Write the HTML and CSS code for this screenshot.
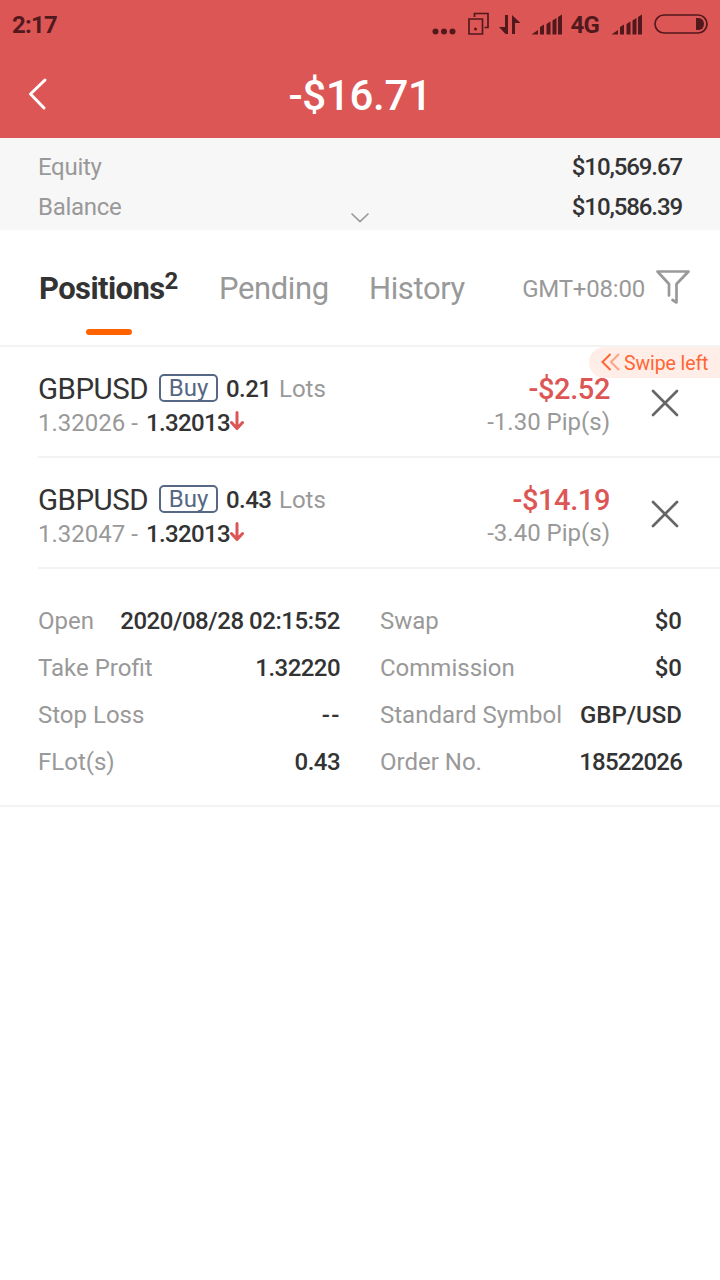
FILE: index.html
```html
<!DOCTYPE html>
<html lang="en">
<head>
    <meta charset="UTF-8">
    <meta name="viewport" content="width=device-width, initial-scale=1.0">
    <title>Positions</title>
    <link rel="stylesheet" href="styles.css">
</head>
<body>
    <header class="header">
        <div class="status-bar">
            <span class="status-text time">2:17</span>
            <svg class="status-icons" width="276" height="50" viewBox="0 0 276 50">
                <g fill="#52191d">
                    <circle cx="3.500" cy="31.500" r="3"/>
                    <circle cx="12" cy="31.500" r="3"/>
                    <circle cx="20.500" cy="31.500" r="3"/>
                    <circle cx="43.500" cy="29" r="1.500"/>
                    <path d="M76 15v19h-2.500l-6.500-7h6V15zM80 15l8.500 8H83v11h-3z"/>
                    <path d="M99.500 34.500l6.500-4.500v4.500zM108 27l4-2.500v10h-4zM114.500 24l4-2.500v13h-4zM120.500 20.500l4-2.500v16.500h-4zM126 17l4-2.500v20h-4z"/>
                    <path d="M179.500 34.500l6.500-4.500v4.500zM188 27l4-2.500v10h-4zM194.500 24l4-2.500v13h-4zM200.500 20.500l4-2.500v16.500h-4zM206 17l4-2.500v20h-4z"/>
                    <path d="M264 18h3a5 6 0 0 1 0 12h-3z"/>
                </g>
                <g fill="none" stroke="#52191d" stroke-width="1.700">
                    <path d="M37 19h13.500v15H37zM42.500 17v-3.500h13.500v14h-3.500"/>
                    <rect x="223" y="15" width="52" height="18" rx="9"/>
                </g>
                <text class="status-text" x="138.500" y="33" fill="#52191d">4G</text>
            </svg>
        </div>
        <div class="nav">
            <svg class="back" width="20" height="34" viewBox="0 0 20 34">
                <path d="M17 3L2.500 17 16 31" fill="none" stroke="#fff" stroke-width="3" stroke-linecap="round" stroke-linejoin="round"/>
            </svg>
            <h1 class="total">-$16.71</h1>
        </div>
    </header>

    <section class="summary">
        <div class="summary-row"><span>Equity</span><span class="num">$10,569.67</span></div>
        <div class="summary-row"><span>Balance</span><span class="num">$10,586.39</span></div>
        <svg class="expand" width="20" height="12" viewBox="0 0 20 12">
            <path d="M1.500 1.500L10 9.500l8.500-8" fill="none" stroke="#999" stroke-width="1.700"/>
        </svg>
    </section>

    <nav class="tabs">
        <div class="tab active">Positions<span class="count">2</span></div>
        <div class="tab pending">Pending</div>
        <div class="tab history">History</div>
        <div class="timezone">GMT+08:00</div>
        <svg class="filter" width="36" height="36" viewBox="0 0 36 36">
            <path d="M14 26.500V15L2.500 2.500h31L21.500 15v18.500L17.500 31" fill="none" stroke="#999" stroke-width="2.700" stroke-linejoin="round" stroke-linecap="round"/>
        </svg>
    </nav>

    <main class="positions">
        <div class="swipe-hint">
            <svg width="19" height="18" viewBox="0 0 19 18" fill="none" stroke="#ff6633" stroke-width="2">
                <path d="M9.500 1L1.500 9l8 8"/>
                <path d="M18 1l-8 8 8 8" opacity=".55"/>
            </svg>
            <span class="swipe-text">Swipe left</span>
        </div>

        <article class="position">
            <div class="info">
                <div class="line top">
                    <span class="symbol">GBPUSD</span>
                    <span class="side">Buy</span>
                    <span class="num lots">0.21</span>
                    <span class="unit">Lots</span>
                </div>
                <div class="line bottom">
                    <span class="prices">1.32026 - </span><span class="num price">1.32013</span>
                    <svg class="down" width="14" height="20" viewBox="0 0 14 20">
                        <path d="M7 1.500v16M1.500 11.500L7 17.500l5.500-6" fill="none" stroke="#dd5656" stroke-width="3" stroke-linecap="round" stroke-linejoin="round"/>
                    </svg>
                </div>
            </div>
            <div class="result">
                <div class="profit">-$2.52</div>
                <div class="pips">-1.30 Pip(s)</div>
            </div>
            <svg class="close" width="28" height="28" viewBox="0 0 28 28">
                <path d="M2 2l24 24M26 2L2 26" stroke="#666" stroke-width="2.700" stroke-linecap="round"/>
            </svg>
        </article>

        <article class="position">
            <div class="info">
                <div class="line top">
                    <span class="symbol">GBPUSD</span>
                    <span class="side">Buy</span>
                    <span class="num lots">0.43</span>
                    <span class="unit">Lots</span>
                </div>
                <div class="line bottom">
                    <span class="prices">1.32047 - </span><span class="num price">1.32013</span>
                    <svg class="down" width="14" height="20" viewBox="0 0 14 20">
                        <path d="M7 1.500v16M1.500 11.500L7 17.500l5.500-6" fill="none" stroke="#dd5656" stroke-width="3" stroke-linecap="round" stroke-linejoin="round"/>
                    </svg>
                </div>
            </div>
            <div class="result">
                <div class="profit">-$14.19</div>
                <div class="pips">-3.40 Pip(s)</div>
            </div>
            <svg class="close" width="28" height="28" viewBox="0 0 28 28">
                <path d="M2 2l24 24M26 2L2 26" stroke="#666" stroke-width="2.700" stroke-linecap="round"/>
            </svg>
        </article>
    </main>

    <section class="details">
        <div class="detail"><span>Open</span><span class="num date">2020/08/28 02:15:52</span></div>
        <div class="detail"><span>Swap</span><span class="num wide">$0</span></div>
        <div class="detail"><span>Take Profit</span><span class="num">1.32220</span></div>
        <div class="detail"><span>Commission</span><span class="num wide">$0</span></div>
        <div class="detail"><span>Stop Loss</span><span class="num empty">--</span></div>
        <div class="detail"><span>Standard Symbol</span><span class="num wide">GBP/USD</span></div>
        <div class="detail"><span>FLot(s)</span><span class="num">0.43</span></div>
        <div class="detail"><span>Order No.</span><span class="num order">18522026</span></div>
    </section>
</body>
</html>
```
FILE: styles.css
```css
* {
    box-sizing: border-box;
}
body {
    margin: 0;
    min-height: 1280px;
    font-family: Roboto, "Liberation Sans", sans-serif;
    font-size: 24px;
    background-color: #fff;
    color: #333;
    white-space: nowrap;
}
svg {
    display: block;
    flex-shrink: 0;
}
.header {
    height: 138px;
    background-color: #dd5656;
}
.status-bar {
    display: flex;
    justify-content: space-between;
    height: 50px;
    padding: 0 12px;
    line-height: 50px;
}
.status-text {
    font-size: 24px;
    font-weight: 700;
    letter-spacing: -0.8px;
    color: #52191d;
}
.nav {
    display: grid;
    grid-template-columns: 20px 1fr 20px;
    align-items: center;
    height: 88px;
    padding: 0 28px;
}
.back {
    margin-bottom: 2px;
}
.total {
    margin: 0;
    text-align: center;
    color: #fff;
    font-size: 42px;
    font-weight: 500;
    line-height: 88px;
    letter-spacing: -0.3px;
    padding-top: 2px;
}
.num {
    color: #333;
    font-weight: 500;
    letter-spacing: -0.55px;
}
.summary {
    position: relative;
    height: 92px;
    padding: 9px 38px 0;
    background-color: #f7f7f7;
    color: #999;
    letter-spacing: -0.3px;
}
.summary .num {
    letter-spacing: -1.1px;
}
.summary-row {
    display: flex;
    justify-content: space-between;
    line-height: 40px;
}
.expand {
    position: absolute;
    left: 350px;
    bottom: 6px;
}
.tabs {
    display: flex;
    align-items: center;
    height: 117px;
    padding: 0 30px 0 39px;
    border-bottom: 2px solid #f3f3f3;
    color: #999;
    font-size: 31px;
    letter-spacing: -0.4px;
}
.tab {
    height: 115px;
    line-height: 117px;
}
.tab.active {
    position: relative;
    width: 180px;
    color: #333;
    font-weight: 700;
    letter-spacing: -0.6px;
}
.tab.active::after {
    content: "";
    position: absolute;
    left: 47px;
    bottom: 10px;
    width: 46px;
    height: 6px;
    border-radius: 3px;
    background-color: #ff6200;
}
.count {
    font-size: 24px;
    line-height: 1;
    vertical-align: 10px;
}
.pending {
    width: 150px;
}
.timezone {
    margin-left: auto;
    padding-top: 2px;
    font-size: 24px;
    letter-spacing: -0.2px;
}
.filter {
    margin: 0 -1px 2px 10px;
}
.positions {
    position: relative;
}
.swipe-hint {
    position: absolute;
    top: 0;
    right: 0;
    display: flex;
    align-items: center;
    gap: 4px;
    width: 131px;
    height: 31px;
    padding-left: 12px;
    border-radius: 16px 0 0 16px;
    background-color: #ffede8;
    color: #ff6633;
    font-size: 19.5px;
    letter-spacing: -0.1px;
}
.swipe-hint svg {
    margin-bottom: 2px;
}
.swipe-text {
    padding-top: 2px;
}
.position {
    display: flex;
    height: 111px;
    margin-left: 38px;
    padding: 25px 41px 0 0;
    border-bottom: 2px solid #f3f3f3;
}
.line {
    display: flex;
    align-items: center;
}
.top, .profit {
    height: 34px;
    line-height: 34px;
}
.bottom, .pips {
    height: 33px;
    line-height: 33px;
}
.symbol {
    width: 121px;
    font-size: 29.5px;
    letter-spacing: -0.5px;
}
.side {
    width: 59px;
    height: 28px;
    margin-top: -2px;
    border: 2px solid #566885;
    border-radius: 5px;
    color: #566885;
    text-align: center;
    line-height: 25px;
}
.lots {
    width: 61px;
    padding-left: 8px;
}
.unit, .prices, .pips {
    color: #999;
}
.prices {
    width: 108px;
}
.prices, .price {
    padding-top: 2px;
}
.price {
    letter-spacing: -0.65px;
}
.down {
    margin-top: -4px;
}
.result {
    margin-left: auto;
    text-align: right;
}
.profit {
    color: #dd5656;
    font-size: 29px;
    font-weight: 500;
    letter-spacing: -0.4px;
}
.close {
    margin: 17px 0 0 41px;
}
.details {
    display: grid;
    grid-template-columns: 302px 302px;
    column-gap: 40px;
    height: 238px;
    padding: 29px 38px 19px;
    border-bottom: 2px solid #f3f3f3;
    color: #999;
}
.detail {
    display: flex;
    justify-content: space-between;
    line-height: 47px;
}
.date {
    letter-spacing: -0.45px;
}
.wide {
    letter-spacing: 0;
}
.empty {
    letter-spacing: 1.5px;
    margin-right: -1px;
}
.order {
    letter-spacing: -0.8px;
}
```
